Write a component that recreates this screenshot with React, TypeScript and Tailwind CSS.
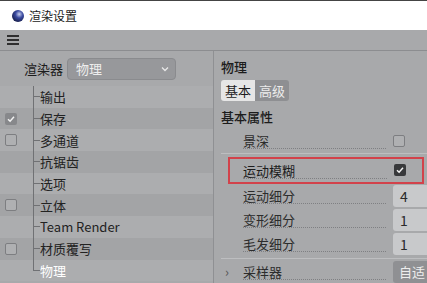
const font = { fontFamily: '"Noto Sans CJK SC", "Noto Sans", sans-serif' }

interface Item {
  label: string
  check?: 'on' | 'off'
  active?: boolean
}

const items: Item[] = [
  { label: '输出' },
  { label: '保存', check: 'on' },
  { label: '多通道', check: 'off' },
  { label: '抗锯齿' },
  { label: '选项' },
  { label: '立体', check: 'off' },
  { label: 'Team Render' },
  { label: '材质覆写', check: 'off' },
  { label: '物理', active: true },
]

function Check({ on, dark }: { on: boolean; dark?: boolean }) {
  if (on) {
    return (
      <div className={`w-[12px] h-[12px] rounded-[2px] flex items-center justify-center ${dark ? 'bg-[#38393b]' : 'bg-[#87888b]'}`}>
        <svg width="8" height="8" viewBox="0 0 8 8">
          <path d="M1 4.2 L3.1 6.2 L7 1.8" stroke="#f2f2f2" strokeWidth="1.5" fill="none" />
        </svg>
      </div>
    )
  }
  return <div className="w-[12px] h-[12px] rounded-[2px] border border-[#7d7e81] bg-[#afb0b2]" />
}

function Row({ label, children, h = 'h-[25px]' }: { label: string; children: React.ReactNode; h?: string }) {
  return (
    <div className={`flex items-center ${h}`}>
      <div className="flex-1 flex items-end ml-[22px] mr-[7px] h-[16px] border-b border-dotted border-[#7f8083]">
        <span className="text-[13px] leading-[15px] text-[#2c2c2c]">{label}</span>
      </div>
      {children}
    </div>
  )
}

function Field({ value }: { value: string }) {
  return (
    <div className="w-[34px] h-[22px] rounded-l-[3px] bg-[#c8c9cb] text-[14px] leading-[22px] pl-[7px] text-[#2a2a2a]">
      {value}
    </div>
  )
}

export default function App() {
  return (
    <div className="w-[427px] h-[283px] overflow-hidden bg-[#a8a9ab] flex flex-col" style={font}>
      {/* title bar */}
      <div className="h-[30px] shrink-0 bg-white border-t border-[#444] flex items-center pl-[12px] gap-[5px]">
        <div className="w-[12px] h-[12px] rounded-full"
          style={{ background: 'radial-gradient(circle at 60% 35%, #c9d0ee 0%, #3a4aa0 35%, #141a44 80%)' }} />
        <span className="text-[12px] text-[#1a1a1a]">渲染设置</span>
      </div>

      {/* toolbar */}
      <div className="h-[21px] shrink-0 border-b border-[#8c8d90] flex items-center pl-[7px]">
        <div className="flex flex-col gap-[2px]">
          <div className="w-[12px] h-[2px] bg-[#2f2f2f]" />
          <div className="w-[12px] h-[2px] bg-[#2f2f2f]" />
          <div className="w-[12px] h-[2px] bg-[#2f2f2f]" />
        </div>
      </div>

      <div className="flex flex-1 min-h-0">
        {/* left */}
        <div className="w-[214px] shrink-0 border-r border-[#8f9093] flex flex-col">
          <div className="h-[35px] shrink-0 flex items-center pl-[24px] gap-[4px]">
            <span className="text-[13px] text-[#1c1c1c]">渲染器</span>
            <div className="w-[109px] h-[22px] rounded-[4px] bg-[#97989b] border border-[#8a8b8e] flex items-center justify-between pl-[8px] pr-[6px]">
              <span className="text-[13px] text-[#eeeeee]">物理</span>
              <svg width="8" height="6" viewBox="0 0 8 6">
                <path d="M1 1.5 L4 4.5 L7 1.5" stroke="#e8e8e8" strokeWidth="1.3" fill="none" />
              </svg>
            </div>
          </div>
          <div className="relative flex flex-col">
            <div className="absolute left-[33px] top-0 h-[185px] w-px bg-[#707174]" />
            {items.map((it, i) => (
              <div key={i} className={`h-[21.7px] shrink-0 flex items-center ${i % 2 === 0 ? 'bg-[#acadaf]' : 'bg-[#a3a4a6]'}`}>
                <div className="w-[33px] pl-[5px] flex items-center">
                  {it.check && <Check on={it.check === 'on'} />}
                </div>
                <div className="w-[7px] h-px bg-[#707174]" />
                <span className={`text-[13px] leading-none ${it.active ? 'text-white' : 'text-[#222]'}`}>{it.label}</span>
              </div>
            ))}
          </div>
        </div>

        {/* right */}
        <div className="flex-1 flex flex-col pl-[7px]">
          <div className="h-[29px] shrink-0 flex items-center pt-[2px]">
            <span className="text-[13px] font-medium text-[#1c1c1c]">物理</span>
          </div>
          <div className="flex h-[22px] w-[68px] rounded-[3px] overflow-hidden">
            <div className="w-[34px] bg-[#e6e6e6] text-[13px] leading-[22px] text-center text-[#1c1c1c]">基本</div>
            <div className="w-[34px] bg-[#8e8f92] text-[13px] leading-[22px] text-center text-[#ececec]">高级</div>
          </div>
          <div className="h-[30px] shrink-0 flex items-center">
            <span className="text-[13px] font-medium text-[#1c1c1c]">基本属性</span>
          </div>
          <div className="pr-[22px]">
            <Row label="景深" h="h-[20px]">
              <Check on={false} />
            </Row>
          </div>
          <div className="h-px bg-[#bdbec0] mt-[2px]" />
          <div className="mt-[3px] ml-[7px] mr-[3px] h-[27px] border-2 border-[#d2424b] flex items-center">
            <div className="flex-1 flex items-end ml-[13px] mr-[7px] h-[17px] border-b border-dotted border-[#7f8083]">
              <span className="text-[13px] leading-[15px] text-[#1c1c1c]">运动模糊</span>
            </div>
            <div className="mr-[16px]"><Check on dark /></div>
          </div>
          <Row label="运动细分"><Field value="4" /></Row>
          <Row label="变形细分"><Field value="1" /></Row>
          <Row label="毛发细分"><Field value="1" /></Row>
          <div className="h-px bg-[#bdbec0] mt-[2px]" />
          <div className="flex items-center h-[22px] mt-[2px]">
            <span className="w-[22px] pl-[4px] text-[13px] text-[#555]">›</span>
            <div className="flex-1 flex items-end mr-[7px] h-[16px] border-b border-dotted border-[#7f8083]">
              <span className="text-[13px] leading-[15px] text-[#2c2c2c]">采样器</span>
            </div>
            <div className="w-[34px] h-[22px] rounded-l-[3px] bg-[#8f9093] text-[13px] leading-[22px] pl-[6px] text-[#ededed] whitespace-nowrap overflow-hidden">自适</div>
          </div>
        </div>
      </div>
    </div>
  )
}
